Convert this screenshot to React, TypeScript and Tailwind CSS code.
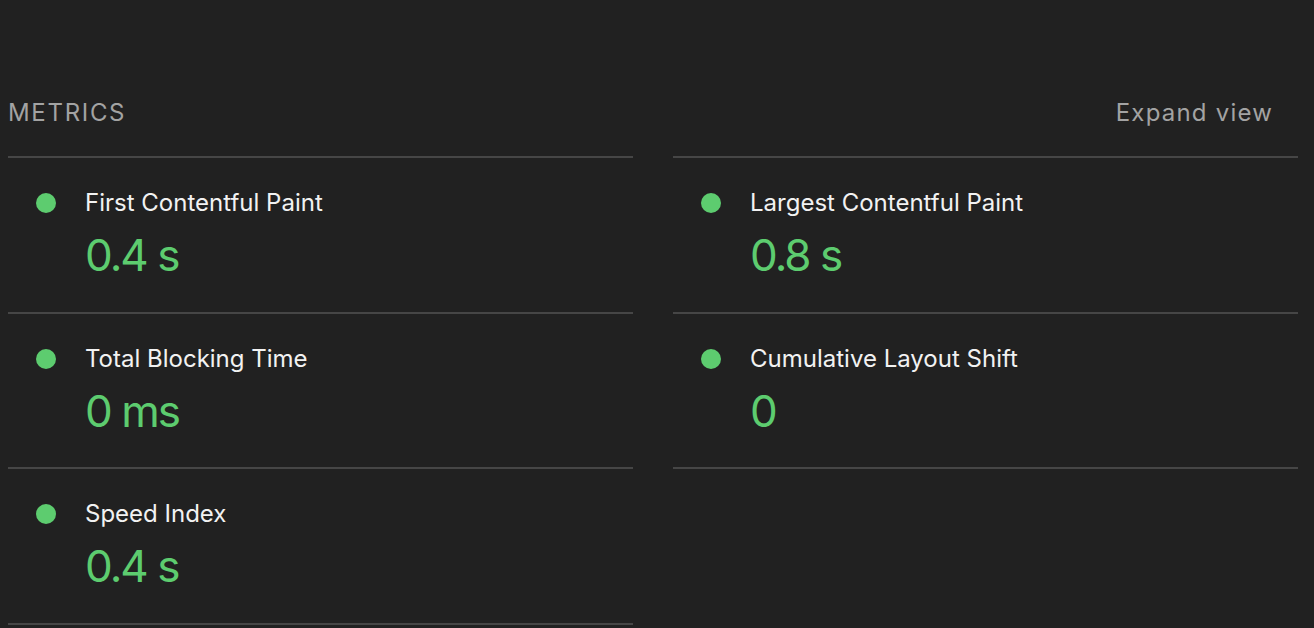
const metrics = [
  { title: 'First Contentful Paint', value: '0.4 s' },
  { title: 'Largest Contentful Paint', value: '0.8 s' },
  { title: 'Total Blocking Time', value: '0 ms' },
  { title: 'Cumulative Layout Shift', value: '0' },
  { title: 'Speed Index', value: '0.4 s' },
]

function Metric({ title, value, last }: { title: string; value: string; last?: boolean }) {
  return (
    <div
      className={
        last
          ? 'border-y-2 border-[#464646] pt-[29px] pb-[30.5px]'
          : 'border-t-2 border-[#464646] pt-[29px] pb-[30.5px]'
      }
    >
      <div className="flex h-[32px] items-center">
        <span className="ml-[28px] h-[20px] w-[20px] shrink-0 rounded-full bg-[#5dcc6f]" />
        <span className="ml-[29px] text-[24px] leading-[32px] text-[#f2f2f2]">
          {title}
        </span>
      </div>
      <div className="mt-[10px] pl-[77px] text-[44px] leading-[52px] tracking-[-0.045em] text-[#5dcc6f]">
        {value}
      </div>
    </div>
  )
}

export default function App() {
  return (
    <div
      className="h-[628px] w-full overflow-hidden bg-[#212121] pl-[8px] pr-[16px] pt-[99px]"
      style={{ fontFamily: 'Inter, "Noto Sans", sans-serif' }}
    >
      <div className="mb-[29px] flex h-[28px] items-center justify-between">
        <span className="text-[24px] uppercase leading-[28px] tracking-[0.07em] text-[#a3a3a3]">
          Metrics
        </span>
        <button className="mr-[25px] text-[24px] leading-[28px] tracking-[0.05em] text-[#a3a3a3]">
          Expand view
        </button>
      </div>

      {/* Metric grid */}
      <div className="grid grid-cols-2 items-start gap-x-[40px]">
        {metrics.map((m, i) => (
          <Metric
            key={m.title}
            title={m.title}
            value={m.value}
            last={i === metrics.length - 1}
          />
        ))}
        <div className="border-t-2 border-[#464646]" />
      </div>
    </div>
  )
}
